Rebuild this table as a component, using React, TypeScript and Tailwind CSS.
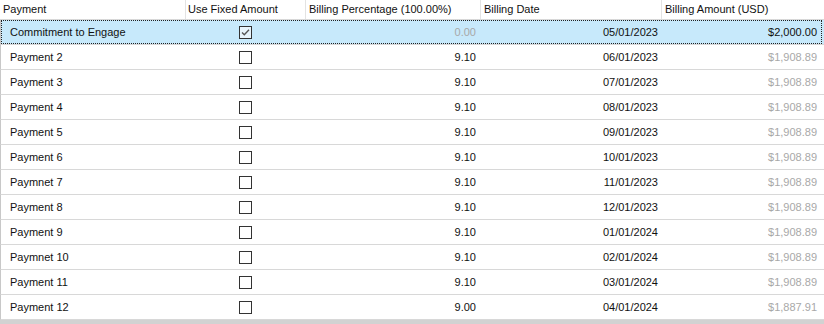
import React from "react";

interface Row {
  name: string;
  fixed: boolean;
  pct: string;
  date: string;
  amount: string;
}

const rows: Row[] = [
  { name: "Commitment to Engage", fixed: true, pct: "0.00", date: "05/01/2023", amount: "$2,000.00" },
  { name: "Payment 2", fixed: false, pct: "9.10", date: "06/01/2023", amount: "$1,908.89" },
  { name: "Payment 3", fixed: false, pct: "9.10", date: "07/01/2023", amount: "$1,908.89" },
  { name: "Payment 4", fixed: false, pct: "9.10", date: "08/01/2023", amount: "$1,908.89" },
  { name: "Payment 5", fixed: false, pct: "9.10", date: "09/01/2023", amount: "$1,908.89" },
  { name: "Payment 6", fixed: false, pct: "9.10", date: "10/01/2023", amount: "$1,908.89" },
  { name: "Paymnet 7", fixed: false, pct: "9.10", date: "11/01/2023", amount: "$1,908.89" },
  { name: "Payment 8", fixed: false, pct: "9.10", date: "12/01/2023", amount: "$1,908.89" },
  { name: "Payment 9", fixed: false, pct: "9.10", date: "01/01/2024", amount: "$1,908.89" },
  { name: "Paymnet 10", fixed: false, pct: "9.10", date: "02/01/2024", amount: "$1,908.89" },
  { name: "Payment 11", fixed: false, pct: "9.10", date: "03/01/2024", amount: "$1,908.89" },
  { name: "Payment 12", fixed: false, pct: "9.00", date: "04/01/2024", amount: "$1,887.91" },
];

const cols = "grid grid-cols-[186px_120px_175px_181px_159px_3px]";

const CheckBox = ({ checked }: { checked: boolean }) => (
  <svg width="13" height="13" viewBox="0 0 13 13">
    <rect x="0.5" y="0.5" width="12" height="12" fill={checked ? "#e8f4fb" : "#fff"} stroke="#333" />
    {checked && <path d="M3 6.5 L5.3 8.8 L10 3.8" fill="none" stroke="#555" strokeWidth="1.3" />}
  </svg>
);

const App = () => {
  return (
    <div className="flex h-[324px] w-[824px] flex-col overflow-hidden bg-white font-['Liberation_Sans',Arial,sans-serif] text-[11px] text-[#111]">
      <div className={`${cols} h-[20px] border-b border-[#d8d8d8] bg-white`}>
        <div className="flex items-center border-r border-[#e3e3e3] pl-[3px]">Payment</div>
        <div className="flex items-center border-r border-[#e3e3e3] pl-[2px]">Use Fixed Amount</div>
        <div className="flex items-center border-r border-[#e3e3e3] pl-[3px]">Billing Percentage (100.00%)</div>
        <div className="flex items-center border-r border-[#e3e3e3] pl-[3px]">Billing Date</div>
        <div className="flex items-center pl-[3px]">Billing Amount (USD)</div>
        <div />
      </div>

      {rows.map((row, i) => {
        const selected = i === 0;
        return (
          <div
            key={row.name}
            className={`${cols} h-[25px] border-b border-[#d8d8d8] border-l border-l-[#c8c8c8] ${
              selected ? "bg-[#c7e9fb]" : "bg-white"
            }`}
          >
            <div
              className={`col-span-5 grid grid-cols-[185px_120px_175px_181px_159px] ${
                selected ? "outline outline-1 -outline-offset-1 outline-dotted outline-[#222]" : ""
              }`}
            >
              <div className="flex items-center pl-[9px]">{row.name}</div>
              <div className="flex items-center justify-center pr-[2px]">
                <CheckBox checked={row.fixed} />
              </div>
              <div className={`flex items-center justify-end pr-[5px] ${selected ? "text-[#a8a8a8]" : ""}`}>
                {row.pct}
              </div>
              <div className="flex items-center justify-end pr-[4px]">{row.date}</div>
              <div className={`flex items-center justify-end pr-[4px] ${selected ? "" : "text-[#a8a8a8]"}`}>
                {row.amount}
              </div>
            </div>
            <div />
          </div>
        );
      })}

      <div className="flex-1 bg-[#d2d2d2]" />
    </div>
  );
};

export default App;
